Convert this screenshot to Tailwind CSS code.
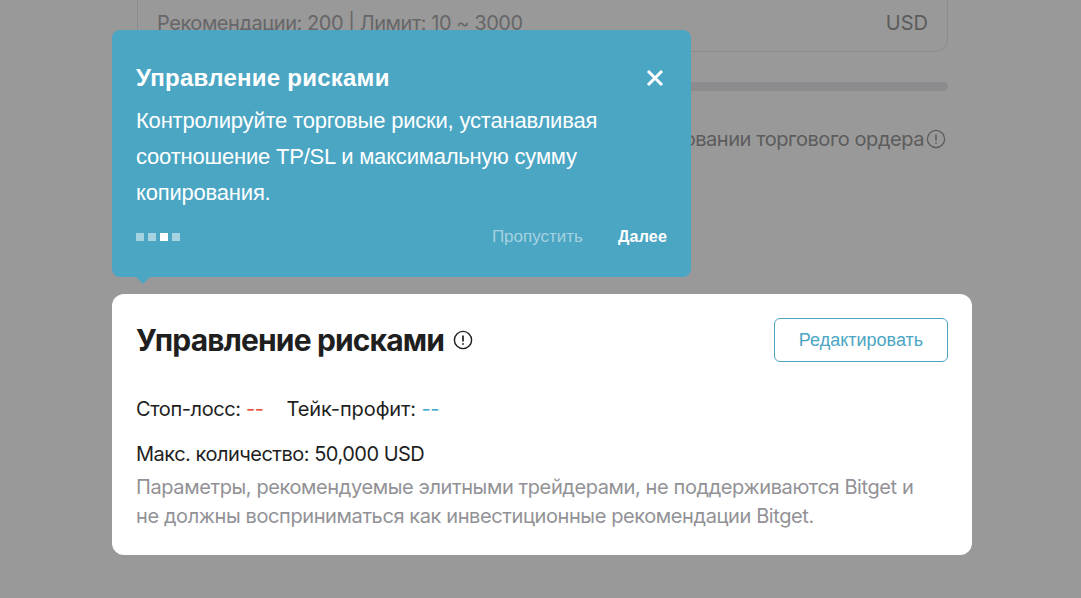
<!DOCTYPE html>
<html lang="ru">
<head>
  <meta charset="UTF-8">
  <meta name="viewport" content="width=device-width, initial-scale=1.0">
  <title>Управление рисками</title>
  <script src="https://cdn.jsdelivr.net/npm/@tailwindcss/browser@4"></script>
</head>
<body class="bg-[#999999] font-['Inter',sans-serif]">
  <div class="relative h-[598px] w-[1081px] overflow-hidden">
    <!-- page behind the overlay -->
    <div class="pl-[137px] pr-[133px]">
      <div class="mt-[-10px] flex h-[62px] items-center justify-between rounded-b-xl border border-[#8c8c8e] px-[19px] pt-[3px] text-xl text-[#5c5c5c]">
        <span class="tracking-[-0.45px] text-[#666668]">Рекомендации: 200 | Лимит: 10 ~ 3000</span>
        <span>USD</span>
      </div>
      <div class="mt-[30px] h-[9px] rounded-full bg-[#8c8c8e]"></div>
      <div class="mt-[36px] flex h-[24px] items-center justify-end gap-[2px] pr-[2px] text-xl tracking-[-0.45px] text-[#5c5c5c]">
        <span>копировании торгового ордера</span>
        <svg class="h-5 w-5" viewBox="0 0 20 20" fill="none" stroke="#5c5c5c" stroke-width="1.3"><circle cx="10" cy="10" r="8.6"/><path d="M10 5.4v6" stroke-width="1.6"/><path d="M10 13.2v1.6" stroke-width="1.6"/></svg>
      </div>

      <!-- highlighted card -->
      <section class="ml-[-25px] mr-[-24px] mt-[143px] h-[261px] rounded-xl bg-white px-6 pt-6">
        <div class="flex items-center justify-between">
          <div class="flex items-center gap-[9px]">
            <h2 class="text-[30px] leading-[44px] font-bold tracking-[-0.85px] text-[#1f1f1f]">Управление рисками</h2>
            <svg class="h-5 w-5" viewBox="0 0 20 20" fill="none" stroke="#1f1f1f" stroke-width="1.4"><circle cx="10" cy="10" r="8.6"/><path d="M10 5.4v6" stroke-width="1.7"/><path d="M10 13.2v1.6" stroke-width="1.7"/></svg>
          </div>
          <button class="h-[44px] w-[174px] rounded-md border border-[#4ba6c3] font-['Liberation_Sans',sans-serif] text-lg text-[#4ba6c3]">Редактировать</button>
        </div>
        <div class="mt-[32px] flex gap-[23px] text-xl leading-[30px] tracking-[-0.4px] text-[#1f1f1f]">
          <span>Стоп-лосс: <span class="text-[#e8503a]">--</span></span>
          <span class="tracking-[-0.1px]">Тейк-профит: <span class="tracking-[-0.4px] text-[#45acd0]">--</span></span>
        </div>
        <p class="mt-[15px] text-xl leading-[30px] tracking-[-0.5px] text-[#1f1f1f]">Макс. количество: 50,000 USD</p>
        <p class="mt-[4px] text-xl leading-[29px] tracking-[-0.4px] text-[#929296]">Параметры, рекомендуемые элитными трейдерами, не поддерживаются Bitget и<br>не должны восприниматься как инвестиционные рекомендации Bitget.</p>
      </section>
    </div>

    <!-- tour tooltip -->
    <div class="absolute left-[112px] top-[30px] h-[247px] w-[579px] rounded-lg bg-[#4ba6c3] px-6 pt-[31px] font-['Liberation_Sans',sans-serif] text-white">
      <div class="flex items-center justify-between">
        <h3 class="text-2xl leading-[34px] font-bold tracking-[0.25px]">Управление рисками</h3>
        <svg class="mr-[3px] h-[18px] w-[18px]" viewBox="0 0 18 18" fill="none" stroke="#fff" stroke-width="3"><path d="M2 2l14 14M16 2L2 16"/></svg>
      </div>
      <p class="mt-[8px] text-[22px] leading-[36px] tracking-[-0.2px]">Контролируйте торговые риски, устанавливая<br>соотношение TP/SL и максимальную сумму<br>копирования.</p>
      <div class="mt-[14px] flex items-center justify-between">
        <div class="flex gap-1">
          <span class="h-2 w-2 bg-white/50"></span>
          <span class="h-2 w-2 bg-white/50"></span>
          <span class="h-2 w-2 bg-white"></span>
          <span class="h-2 w-2 bg-white/50"></span>
        </div>
        <div class="flex gap-[35px] text-[17px] leading-6">
          <span class="text-white/50">Пропустить</span>
          <span class="font-bold text-base tracking-[0.2px]">Далее</span>
        </div>
      </div>
      <span class="absolute left-[24px] top-full h-0 w-0 border-x-[7px] border-t-[7px] border-x-transparent border-t-[#4ba6c3]"></span>
    </div>
  </div>
</body>
</html>
